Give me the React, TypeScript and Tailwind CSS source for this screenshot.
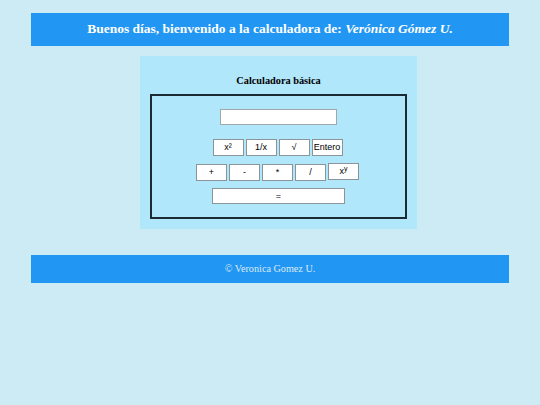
import React, { useState } from "react";

const btn =
  "h-[17px] w-[31px] bg-white border border-[#8a9499] text-[9px] text-black leading-none flex items-center justify-center";

const App: React.FC = () => {
  const [value, setValue] = useState("");

  return (
    <div className="min-h-[405px] w-[540px] bg-[#cdebf5] pt-[13px] font-['Liberation_Serif','Times_New_Roman',serif]">
      <div className="mx-[31px] h-[33px] bg-[#2196f3] flex items-center justify-center">
        <h1 className="text-white font-bold text-[13.5px]">
          Buenos días, bienvenido a la calculadora de:{" "}
          <em className="italic">Verónica Gómez U.</em>
        </h1>
      </div>

      <div className="ml-[140px] mt-[10px] w-[277px] bg-[#b0e7fa] px-[10px] pt-[18px] pb-[10px]">
        <h2 className="text-center font-bold text-[10.3px] h-[13px] leading-[13px] text-black mb-[7px]">
          Calculadora básica
        </h2>

        <div className="border-2 border-[#1c2b33] pt-[13px] pb-[13px] flex flex-col items-center font-['Liberation_Sans',Arial,sans-serif]">
          <input
            type="text"
            value={value}
            onChange={(e) => setValue(e.target.value)}
            className="w-[117px] h-[16px] bg-white border border-[#a0a8ac] outline-none text-[9px] px-1"
          />

          <div className="flex gap-[2px] mt-[14px] -ml-[2px]">
            <button className={btn}>x²</button>
            <button className={btn}>1/x</button>
            <button className={btn}>√</button>
            <button className={btn + " text-[9.5px]"}>Entero</button>
          </div>

          <div className="flex gap-[2px] mt-[8px] items-start -ml-[2px]">
            <button className={btn}>+</button>
            <button className={btn}>-</button>
            <button className={btn}>*</button>
            <button className={btn}>/</button>
            <button className={btn + " -mt-[1px]"}>
              x<sup className="text-[7px] -top-[3px]">y</sup>
            </button>
          </div>

          <button className="mt-[7px] h-[16px] w-[133px] bg-white border border-[#8a9499] text-[9px] leading-none">
            =
          </button>
        </div>
      </div>

      <div className="mx-[31px] mt-[26px] h-[28px] bg-[#2196f3] flex items-center justify-center">
        <p className="text-[#dde9f4] text-[10.2px]">© Veronica Gomez U.</p>
      </div>
    </div>
  );
};

export default App;
